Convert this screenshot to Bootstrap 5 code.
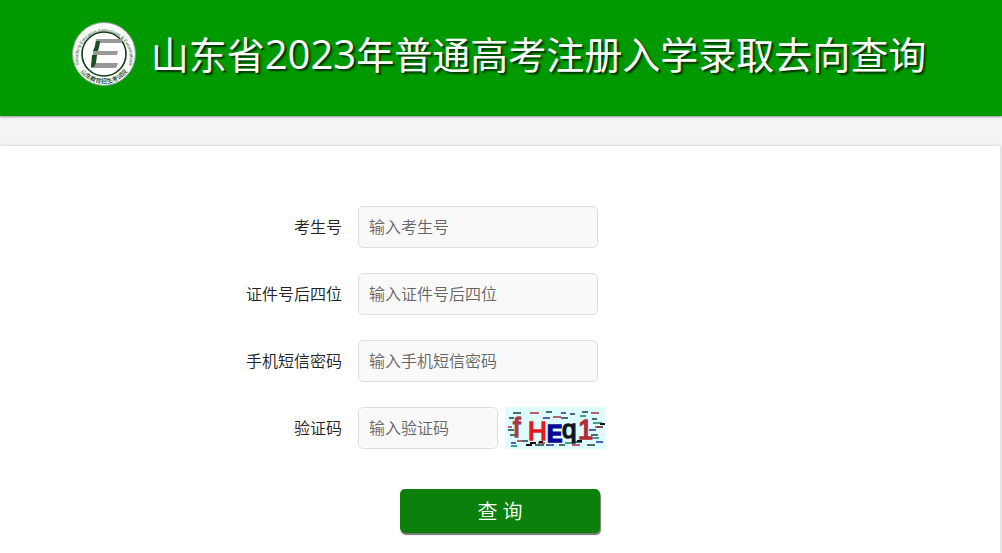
<!DOCTYPE html>
<html lang="zh-CN">
<head>
<meta charset="utf-8">
<meta name="viewport" content="width=device-width, initial-scale=1">
<title>山东省2023年普通高考注册入学录取去向查询</title>
<link href="https://cdn.jsdelivr.net/npm/bootstrap@5.3.0/dist/css/bootstrap.min.css" rel="stylesheet">
<style>
body{background:#f4f4f4;color:#333;font-family:"Noto Sans","Noto Sans CJK SC",sans-serif;font-size:16px}
.site-head{background:#090;min-height:116px;padding:20px 5px 28px 0;gap:14px;box-shadow:0 1px 2px rgba(0,0,0,.4)}
.site-logo{width:66px;height:66px}
.site-title{color:#fff;font-size:38px;line-height:44px;font-weight:400;text-shadow:2px 2px 2px rgba(0,0,0,.7)}
.site-year{font-family:"Open Sans","Noto Sans",sans-serif;font-size:40px;font-weight:400}
.query-panel{background:#fff;margin:30px 2px 0 0;padding-top:60px;box-shadow:0 0 3px rgba(0,0,0,.2)}
.query-rows{gap:25px}
.query-label{width:calc(50% - 142px);line-height:24px;color:#222;font-weight:350}
.query-input{width:240px;height:42px;padding:8px 10px;background:#f9f9f9;border:1px solid #ddd;border-radius:5px;font-weight:350}
.query-input::placeholder{color:#666}
.query-input-short{width:140px}
.captcha{width:100px;height:42px;margin-left:7px}
.query-btn{width:200px;height:44px;margin-top:40px;padding:2px 0 0;border:0;border-radius:5px;background:#0b810b;color:#fff;font-size:20px;font-weight:350;box-shadow:1px 2px 1px #777}
.query-btn:hover{background:#090;color:#fff}
</style>
</head>
<body class="d-flex flex-column min-vh-100">
<header class="site-head d-flex flex-wrap align-items-center justify-content-center">
<svg class="site-logo" viewBox="0 0 66 66" role="img" aria-label="山东省教育招生考试院">
<defs><path id="ringTop" d="M8 44A26 26 0 1 1 58 44"/><path id="ringBottom" d="M6 44A29 29 0 0 0 60 44"/></defs>
<circle cx="33" cy="33" r="31.500" fill="#f7faf7" stroke="#8aa58b"/>
<circle cx="33" cy="33" r="22" fill="#fff" stroke="#173e1d" stroke-width="1.600"/>
<text font-size="4.400" font-family="Liberation Sans,sans-serif" fill="#2f5433"><textPath href="#ringTop">Shandong Education Admissions &amp; Examinations</textPath></text>
<text font-size="6" font-family="Noto Sans CJK SC,sans-serif" fill="#153f1a" font-weight="500"><textPath href="#ringBottom" startOffset="50%" text-anchor="middle">山东教育招生考试院</textPath></text>
<path d="M25 18h27l-2 4H29l-1 5-4-1ZM22 30h25l-1 4H22ZM20 42l5-1v1h22l-2 5H20Z" fill="#999"/>
<path d="M25 20h4l-1 6-1 4h-5l2-5ZM21 34h5l-1 8-2 4h-3Z" fill="#16501d"/>
</svg>
<h1 class="site-title m-0">山东省<span class="site-year">2023</span>年普通高考注册入学录取去向查询</h1>
</header>
<main class="query-panel flex-grow-1 pb-3">
<form>
<div class="query-rows d-flex flex-column">
<div class="d-flex align-items-center"><label class="query-label text-end pe-3" for="examNo">考生号</label><input class="form-control query-input" id="examNo" type="text" placeholder="输入考生号"></div>
<div class="d-flex align-items-center"><label class="query-label text-end pe-3" for="idTail">证件号后四位</label><input class="form-control query-input" id="idTail" type="text" placeholder="输入证件号后四位"></div>
<div class="d-flex align-items-center"><label class="query-label text-end pe-3" for="smsCode">手机短信密码</label><input class="form-control query-input" id="smsCode" type="password" placeholder="输入手机短信密码"></div>
<div class="d-flex align-items-center"><label class="query-label text-end pe-3" for="verifyCode">验证码</label><input class="form-control query-input query-input-short" id="verifyCode" type="text" placeholder="输入验证码">
<svg class="captcha" viewBox="0 0 100 42" role="img" aria-label="验证码图片">
<path fill="#dffcfc" d="M0 0h100v42H0z"/>
<g fill="none" stroke-width="1.500">
<path stroke="#163e42" d="M8 6h8M4 11h5M41 5h6M56 11h7M77 5h6M87 12h5M3 23h6M5 28h8M17 34h6M30 38h9M54 38h6M70 35h7M82 38h8M92 20h6M65 7h5M86 28h7"/>
<path stroke="#a33040" d="M25 6h9M12 34h5M33 36h7M48 10h8M90 20h6M67 38h8M86 6h8M3 20h4"/>
<path stroke="#222c99" d="M38 11h7M6 36h5M41 38h8M84 23h7M91 35h7M56 6h5"/>
<path stroke="#13825b" d="M6 39h6M75 9h6M88 16h9M60 36h7M87 31h7"/>
</g>
<g font-family="Liberation Sans,sans-serif" font-weight="400" stroke-width="1.500">
<text x="8" y="30" font-size="27" fill="#a63c49" stroke="#a63c49">f</text>
<text x="23" y="33" font-size="26" fill="#e51820" stroke="#e51820">H</text>
<text x="42" y="35" font-size="23" font-weight="700" fill="#080899" stroke="#080899">E</text>
<text x="57" y="31" font-size="26" fill="#101820" stroke="#101820">q</text>
<text x="73" y="32" font-size="27" fill="#b32d35" stroke="#b32d35">1</text>
</g>
<path fill="none" stroke="#111" stroke-width="2" d="M21 38h6M25 36h6M34 35h4M72 34h5M95 17h5"/>
</svg></div>
</div>
<div class="d-flex justify-content-center"><button class="btn query-btn" type="submit">查 询</button></div>
</form>
</main>
<script src="https://cdn.jsdelivr.net/npm/bootstrap@5.3.0/dist/js/bootstrap.bundle.min.js"></script>
</body>
</html>
